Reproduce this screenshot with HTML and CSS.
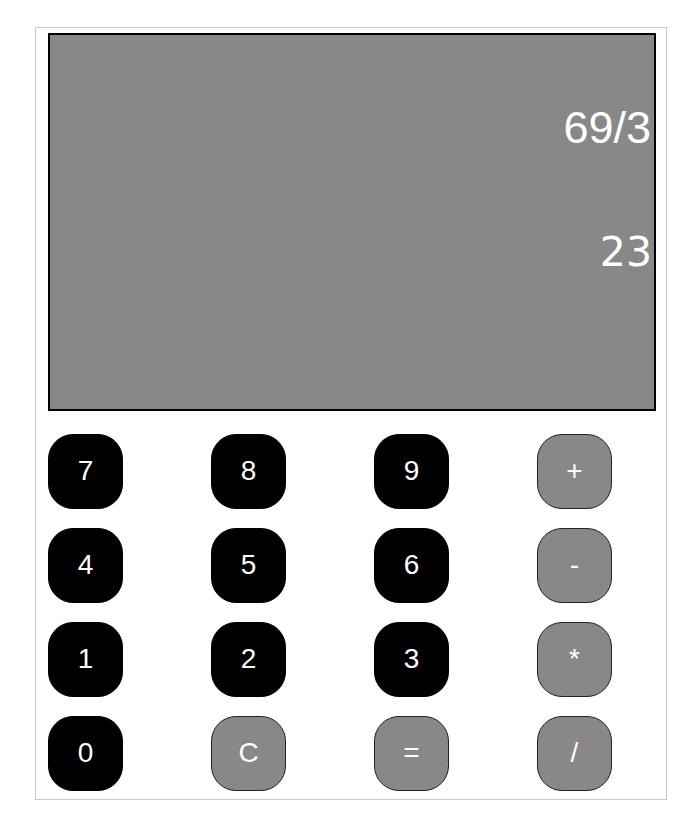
FILE: index.html
```html
<!DOCTYPE html>
<html>
<head>
<meta charset="utf-8">
<link rel="stylesheet" href="styles.css">
</head>
<body>
<div class="calc">
  <div class="display">
    <div class="expr">69/3</div>
    <div class="result">23</div>
  </div>
  <div class="keys">
    <button class="key num">7</button>
    <button class="key num">8</button>
    <button class="key num">9</button>
    <button class="key op">+</button>
    <button class="key num">4</button>
    <button class="key num">5</button>
    <button class="key num">6</button>
    <button class="key op">-</button>
    <button class="key num">1</button>
    <button class="key num">2</button>
    <button class="key num">3</button>
    <button class="key op">*</button>
    <button class="key num">0</button>
    <button class="key op">C</button>
    <button class="key op">=</button>
    <button class="key op">/</button>
  </div>
</div>
</body>
</html>
```
FILE: styles.css
```css
html, body {
  margin: 0;
  padding: 0;
  background: #fff;
}
body {
  padding: 27px 0 0 35px;
}
.calc {
  box-sizing: border-box;
  width: 632px;
  height: 773px;
  border: 1px solid #c8c8c8;
  padding: 5px 10px 0 12px;
}
.display {
  box-sizing: border-box;
  width: 608px;
  height: 378px;
  background: #888;
  border: 2px solid #000;
  color: #fff;
  text-align: right;
  padding-top: 68px;
}
.expr {
  font-family: "Liberation Sans", Arial, sans-serif;
  font-size: 45px;
  line-height: 50px;
  padding-right: 3px;
}
.result {
  font-family: "DejaVu Sans", sans-serif;
  font-size: 41px;
  line-height: 50px;
  margin-top: 74px;
  padding-right: 2px;
}
.keys {
  display: grid;
  grid-template-columns: repeat(4, 75px);
  grid-auto-rows: 75px;
  column-gap: 88px;
  row-gap: 19px;
  margin-top: 23px;
}
.key {
  box-sizing: border-box;
  width: 75px;
  height: 75px;
  border-radius: 25px;
  color: #fff;
  font-family: "Liberation Sans", Arial, sans-serif;
  font-size: 28px;
  line-height: 1;
  padding: 0 0 2px 0;
  margin: 0;
  cursor: pointer;
}
.num {
  background: #000;
  border: 1px solid #000;
}
.op {
  background: #888;
  border: 1px solid #222;
}
```
